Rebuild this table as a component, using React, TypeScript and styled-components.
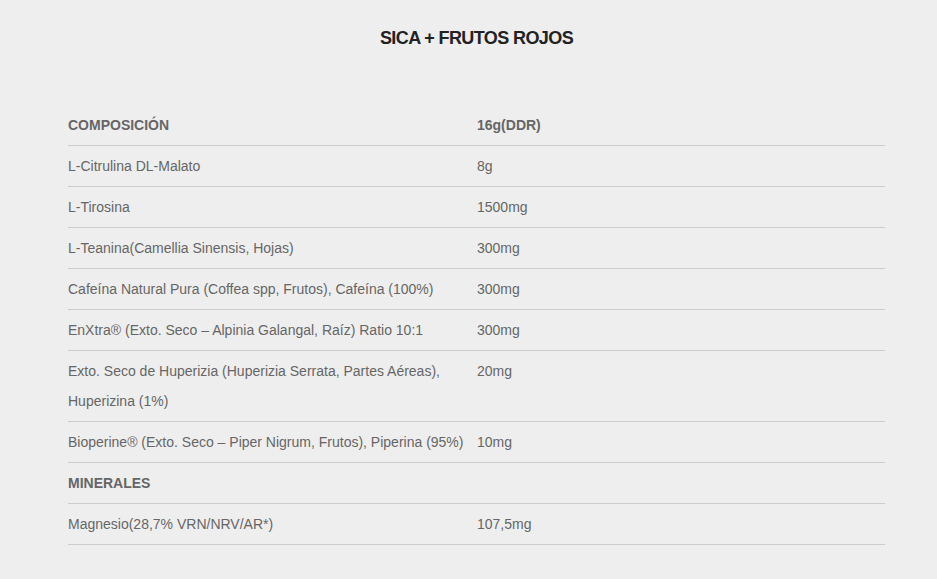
import React from 'react';
import styled, { createGlobalStyle } from 'styled-components';

interface Fila {
  nombre: string;
  cantidad: string;
  titulo?: boolean;
}

const filas: Fila[] = [
  { nombre: 'COMPOSICIÓN', cantidad: '16g(DDR)', titulo: true },
  { nombre: 'L-Citrulina DL-Malato', cantidad: '8g' },
  { nombre: 'L-Tirosina', cantidad: '1500mg' },
  { nombre: 'L-Teanina(Camellia Sinensis, Hojas)', cantidad: '300mg' },
  { nombre: 'Cafeína Natural Pura (Coffea spp, Frutos), Cafeína (100%)', cantidad: '300mg' },
  { nombre: 'EnXtra® (Exto. Seco – Alpinia Galangal, Raíz) Ratio 10:1', cantidad: '300mg' },
  {
    nombre: 'Exto. Seco de Huperizia (Huperizia Serrata, Partes Aéreas), Huperizina (1%)',
    cantidad: '20mg',
  },
  { nombre: 'Bioperine® (Exto. Seco – Piper Nigrum, Frutos), Piperina (95%)', cantidad: '10mg' },
  { nombre: 'MINERALES', cantidad: '', titulo: true },
  { nombre: 'Magnesio(28,7% VRN/NRV/AR*)', cantidad: '107,5mg' },
];

const App: React.FC = () => {
  return (
    <>
      <GlobalStyle />
      <Pagina>
        <Titulo>SICA + FRUTOS ROJOS</Titulo>
        <Tabla>
          <tbody>
            {filas.map((f) => (
              <tr key={f.nombre}>
                <Celda $titulo={f.titulo} $ancha>
                  {f.nombre}
                </Celda>
                <Celda $titulo={f.titulo}>{f.cantidad}</Celda>
              </tr>
            ))}
          </tbody>
        </Tabla>
      </Pagina>
    </>
  );
};

export default App;

const GlobalStyle = createGlobalStyle`
  html, body {
    margin: 0;
    padding: 0;
    background: #eeeeee;
  }
  body {
    font-family: 'Liberation Sans', Arial, sans-serif;
  }
`;

const Pagina = styled.div`
  width: 817px;
  padding: 23px 52px 40px 68px;
`;

const Titulo = styled.h2`
  margin: 0 0 52px;
  font-size: 18px;
  letter-spacing: -0.6px;
  line-height: 30px;
  font-weight: bold;
  color: #222;
  text-align: center;
`;

const Tabla = styled.table`
  width: 100%;
  border-collapse: collapse;
  table-layout: fixed;
`;

const Celda = styled.td<{ $titulo?: boolean; $ancha?: boolean }>`
  width: ${(p) => (p.$ancha ? '399px' : 'auto')};
  padding: 5px 0;
  padding-right: ${(p) => (p.$ancha ? '10px' : '0')};
  border-bottom: 1px solid #cccccc;
  vertical-align: top;
  font-size: 14px;
  line-height: 30px;
  color: #666666;
  font-weight: ${(p) => (p.$titulo ? 'bold' : 'normal')};
`;
